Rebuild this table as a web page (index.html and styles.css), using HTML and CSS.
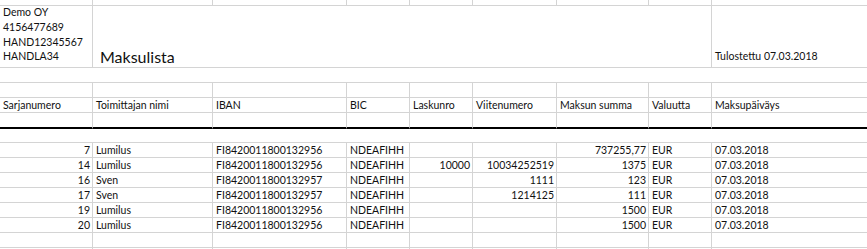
FILE: index.html
```html
<!DOCTYPE html>
<html lang="fi">
<head>
<meta charset="utf-8">
<title>Maksulista</title>
<link rel="stylesheet" href="styles.css">
</head>
<body>
<div class="sheet">
  <!-- row 0 (partially visible) -->
  <div class="c r-top"></div><div class="c r-top"></div><div class="c r-top"></div><div class="c r-top"></div><div class="c r-top"></div><div class="c r-top"></div><div class="c r-top"></div><div class="c r-top"></div><div class="c r-top last"></div>

  <!-- header block -->
  <div class="c r-head company">
    <span>Demo OY</span>
    <span>4156477689</span>
    <span>HAND12345567</span>
    <span>HANDLA34</span>
  </div>
  <div class="c r-head title span7"><span>Maksulista</span></div>
  <div class="c r-head printed last"><span>Tulostettu 07.03.2018</span></div>

  <!-- merged empty row -->
  <div class="c r full"></div>

  <!-- empty row -->
  <div class="c r"></div><div class="c r"></div><div class="c r"></div><div class="c r"></div><div class="c r"></div><div class="c r"></div><div class="c r"></div><div class="c r"></div><div class="c r last"></div>

  <!-- column headers -->
  <div class="c r">Sarjanumero</div>
  <div class="c r">Toimittajan nimi</div>
  <div class="c r">IBAN</div>
  <div class="c r">BIC</div>
  <div class="c r">Laskunro</div>
  <div class="c r">Viitenumero</div>
  <div class="c r">Maksun summa</div>
  <div class="c r">Valuutta</div>
  <div class="c r last">Maksupäiväys</div>

  <!-- empty row with heavy bottom rule -->
  <div class="c r rule"></div><div class="c r rule"></div><div class="c r rule"></div><div class="c r rule"></div><div class="c r rule"></div><div class="c r rule"></div><div class="c r rule"></div><div class="c r rule"></div><div class="c r rule last"></div>

  <!-- merged empty row -->
  <div class="c r-short full"></div>

  <!-- data -->
  <div class="c r num">7</div><div class="c r">Lumilus</div><div class="c r">FI8420011800132956</div><div class="c r">NDEAFIHH</div><div class="c r num"></div><div class="c r num"></div><div class="c r num">737255,77</div><div class="c r">EUR</div><div class="c r last">07.03.2018</div>
  <div class="c r num">14</div><div class="c r">Lumilus</div><div class="c r">FI8420011800132956</div><div class="c r">NDEAFIHH</div><div class="c r num">10000</div><div class="c r num">10034252519</div><div class="c r num">1375</div><div class="c r">EUR</div><div class="c r last">07.03.2018</div>
  <div class="c r num">16</div><div class="c r">Sven</div><div class="c r">FI8420011800132957</div><div class="c r">NDEAFIHH</div><div class="c r num"></div><div class="c r num">1111</div><div class="c r num">123</div><div class="c r">EUR</div><div class="c r last">07.03.2018</div>
  <div class="c r num">17</div><div class="c r">Sven</div><div class="c r">FI8420011800132957</div><div class="c r">NDEAFIHH</div><div class="c r num"></div><div class="c r num">1214125</div><div class="c r num">111</div><div class="c r">EUR</div><div class="c r last">07.03.2018</div>
  <div class="c r num">19</div><div class="c r">Lumilus</div><div class="c r">FI8420011800132956</div><div class="c r">NDEAFIHH</div><div class="c r num"></div><div class="c r num"></div><div class="c r num">1500</div><div class="c r">EUR</div><div class="c r last">07.03.2018</div>
  <div class="c r num">20</div><div class="c r">Lumilus</div><div class="c r">FI8420011800132956</div><div class="c r">NDEAFIHH</div><div class="c r num"></div><div class="c r num"></div><div class="c r num">1500</div><div class="c r">EUR</div><div class="c r last">07.03.2018</div>

  <!-- trailing empty rows -->
  <div class="c r"></div><div class="c r"></div><div class="c r"></div><div class="c r"></div><div class="c r"></div><div class="c r"></div><div class="c r"></div><div class="c r"></div><div class="c r last"></div>
  <div class="c r-end"></div><div class="c r-end"></div><div class="c r-end"></div><div class="c r-end"></div><div class="c r-end"></div><div class="c r-end"></div><div class="c r-end"></div><div class="c r-end"></div><div class="c r-end last"></div>
</div>
</body>
</html>
```

FILE: styles.css
```css
html, body {
  margin: 0;
  padding: 0;
  background: #ffffff;
}

body {
  height: 249px;
  overflow: hidden;
}

.sheet {
  display: grid;
  grid-template-columns: 93px 120px 134px 63px 63px 84px 92px 63px 155px;
  width: 867px;
  font-family: Lato, "Liberation Sans", sans-serif;
  font-size: 10.5px;
  color: #111111;
}

.c {
  box-sizing: border-box;
  border-right: 1px solid #d4d4d4;
  border-bottom: 1px solid #d4d4d4;
  padding: 0 2px 0 3px;
  line-height: 14px;
  white-space: nowrap;
  overflow: hidden;
}

.c.last {
  border-right: none;
}

.r-top {
  height: 6px;
}

.r {
  height: 15px;
}

.r-short {
  height: 14px;
}

.r-end {
  height: 2px;
  border-bottom: none;
}

.r-head {
  height: 62px;
  display: flex;
  flex-direction: column;
  justify-content: flex-end;
  padding-bottom: 3px;
}

.company {
  line-height: 14.7px;
}

.title {
  font-size: 16px;
  line-height: 18px;
  padding-left: 7px;
  padding-bottom: 1px;
}

.printed {
  line-height: 15px;
}

.span7 {
  grid-column: span 7;
}

.full {
  grid-column: 1 / -1;
  border-right: none;
}

.rule {
  height: 16px;
  border-bottom: 2px solid #000000;
}

.num {
  text-align: right;
}
```
